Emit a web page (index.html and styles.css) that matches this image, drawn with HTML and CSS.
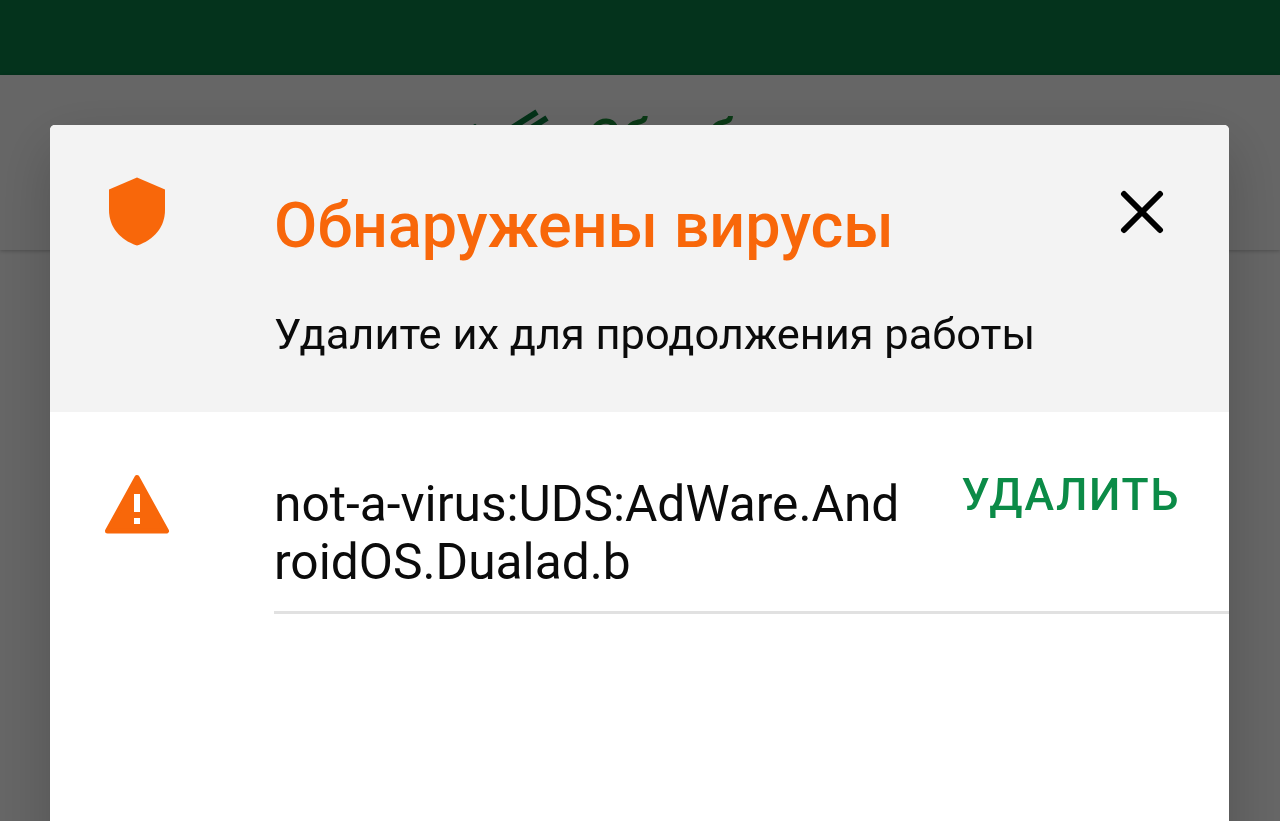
FILE: index.html
```
<!DOCTYPE html>
<html lang="ru">
<head>
    <meta charset="UTF-8">
    <meta name="viewport" content="width=device-width, initial-scale=1.0">
    <title>Обнаружены вирусы</title>
    <link rel="stylesheet" href="styles.css">
</head>
<body>

    <!-- App behind the dialog -->
    <div class="app">
        <div class="status-bar"></div>
        <header class="app-header">
            <svg class="logo-icon" width="86" height="86" viewBox="0 0 86 86">
                <path d="M5 20 L10 17 L14 20" stroke-width="2" />
                <path d="M39 25 L72 4" />
                <path d="M63 22 L82 10" />
            </svg>
            <span class="logo-text">Сбербанк</span>
        </header>
    </div>

    <!-- Virus warning -->
    <div class="overlay">
        <div class="dialog">
            <div class="dialog-header">
                <svg class="icon" width="58" height="69" viewBox="0 0 58 69">
                    <path d="M29 .5 L57 12.5 V33 C57 50 46 63 29 68.5 C12 63 1 50 1 33 V12.5 Z" fill="#f8670a" />
                </svg>
                <div class="heading">
                    <h1>Обнаружены вирусы</h1>
                    <p>Удалите их для продолжения работы</p>
                </div>
                <button class="close-btn" aria-label="Закрыть">
                    <svg width="44" height="44" viewBox="0 0 44 44">
                        <path d="M4 4 L40 40 M40 4 L4 40" stroke="#000" stroke-width="6" stroke-linecap="round" />
                    </svg>
                </button>
            </div>

            <div class="threat">
                <svg class="icon" width="66" height="60" viewBox="0 0 66 60">
                    <path d="M33 3.5 L62.5 57 H3.5 Z" fill="#f8670a" stroke="#f8670a" stroke-width="5" stroke-linejoin="round" />
                    <path d="M30 20 H36 V38 H30 Z M30 44 H36 V50 H30 Z" fill="#fff" />
                </svg>
                <div class="threat-body">
                    <div class="threat-name">not-a-virus:UDS:AdWare.AndroidOS.Dualad.b</div>
                    <button class="delete-btn">Удалить</button>
                </div>
            </div>
        </div>
    </div>

</body>
</html>
```

FILE: styles.css
```
* {
    box-sizing: border-box;
}
body {
    margin: 0;
    height: 100vh;
    overflow: hidden;
    font-family: Roboto, "Liberation Sans", sans-serif;
    background-color: #fff;
    color: #0b0b0b;
}
.status-bar {
    height: 75px;
    background-color: #0a8047; /* Brand green */
}
.app-header {
    display: flex;
    justify-content: center;
    gap: 34px;
    height: 175px;
    padding: 33px 0 0 4px;
    box-shadow: 0 1px 4px rgba(0, 0, 0, 0.25);
}
.logo-icon {
    fill: none;
    stroke: #087d3c;
    stroke-width: 6;
}
.logo-text {
    font-size: 53px;
    font-weight: 500;
    font-style: italic;
    line-height: 62px;
    color: #1a9038;
}
button {
    padding: 0;
    border: none;
    background: none;
    font-family: inherit;
    cursor: pointer;
}

/* Dark layer over the app */
.overlay {
    position: fixed;
    inset: 0;
    padding: 125px 51px 0 50px;
    background-color: rgba(0, 0, 0, 0.6);
}
.dialog {
    height: 760px;
    overflow: hidden;
    background-color: #fff;
    border-radius: 5px;
    box-shadow: 0 20px 60px rgba(0, 0, 0, 0.2);
}
.dialog-header {
    display: grid;
    grid-template-columns: 224px 1fr auto;
    align-items: start;
    height: 287px;
    padding: 52px 65px 0 0;
    background-color: #f3f3f3;
}
.icon {
    justify-self: start;
}
.dialog-header .icon {
    margin-left: 58px;
}
.heading {
    padding-top: 13px;
    white-space: nowrap;
}
h1 {
    margin: 0;
    font-size: 62.8px;
    font-weight: 500;
    line-height: 72px;
    color: #f8670a;
}
p {
    margin: 48px 0 0;
    font-size: 43.4px;
    line-height: 50px;
}
.close-btn {
    height: 44px;
    margin-top: 13px;
}
.close-btn svg {
    display: block;
}
.threat {
    display: grid;
    grid-template-columns: 224px 1fr;
    align-items: start;
}
.threat .icon {
    margin: 62px 0 0 54px;
}
.threat-body {
    display: flex;
    justify-content: space-between;
    align-items: flex-start;
    height: 202px;
    padding: 62px 49px 0 0;
    border-bottom: 3px solid #e1e1e1;
}
.threat-name {
    width: 632px;
    padding-top: 1px;
    font-size: 49.7px;
    line-height: 58px;
    word-break: break-all;
}
.delete-btn {
    font-size: 44.5px;
    font-weight: 500;
    line-height: 42px;
    letter-spacing: 1.6px;
    text-transform: uppercase;
    color: #0b8b47;
}
```
